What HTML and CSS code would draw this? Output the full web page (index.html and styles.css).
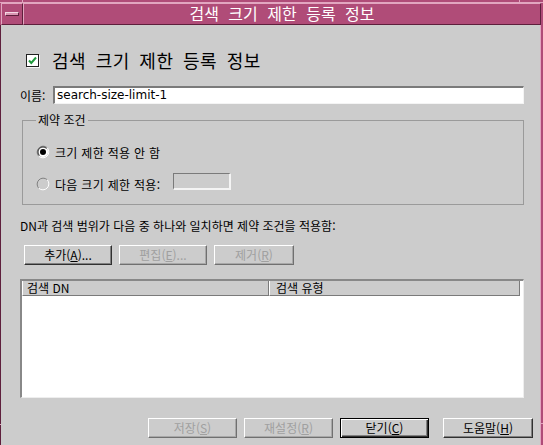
FILE: index.html
```html
<!DOCTYPE html>
<html lang="ko">
<head>
<meta charset="utf-8">
<title>검색 크기 제한 등록 정보</title>
<link rel="stylesheet" href="styles.css">
</head>
<body>
<div class="frame">
  <div class="frame-top"><span class="tick tick-l"></span><span class="tick tick-r"></span></div>
  <div class="titlebar">
    <div class="menu-btn"><span class="menu-bar"></span></div>
    <div class="title">검색 크기 제한 등록 정보</div>
  </div>
  <div class="body-row">
    <div class="client">
      <div class="heading">
        <span class="checkbox"><svg width="11" height="11" viewBox="0 0 11 11"><path d="M2 5.5 L4.3 8 L9 2.5" fill="none" stroke="#1e9a3c" stroke-width="2"/></svg></span>
        <h1 class="heading-text">검색 크기 제한 등록 정보</h1>
      </div>
      <div class="name-row">
        <span class="name-label">이름:</span>
        <div class="field">search-size-limit-1</div>
      </div>
      <fieldset class="group">
        <legend class="group-label">제약 조건</legend>
        <div class="radio-row">
          <svg class="radio" width="14" height="14" viewBox="0 0 14 14">
            <circle cx="7" cy="7" r="5" fill="#fff"/>
            <path d="M2.76 11.24 A6 6 0 0 1 11.24 2.76" stroke="#808080" fill="none"/>
            <path d="M11.24 2.76 A6 6 0 0 1 2.76 11.24" stroke="#fff" fill="none"/>
            <path d="M3.46 10.54 A5 5 0 0 1 10.54 3.46" stroke="#303030" fill="none"/>
            <circle cx="7" cy="7" r="3" fill="#000"/>
          </svg>
          <span>크기 제한 적용 안 함</span>
        </div>
        <div class="radio-row">
          <svg class="radio" width="14" height="14" viewBox="0 0 14 14">
            <path d="M2.76 11.24 A6 6 0 0 1 11.24 2.76" stroke="#808080" fill="none"/>
            <path d="M11.24 2.76 A6 6 0 0 1 2.76 11.24" stroke="#fff" fill="none"/>
          </svg>
          <span>다음 크기 제한 적용:</span>
          <div class="small-field"></div>
        </div>
      </fieldset>
      <p class="desc">DN과 검색 범위가 다음 중 하나와 일치하면 제약 조건을 적용함:</p>
      <div class="btn-row">
        <div class="btn">추가(<u>A</u>)...</div>
        <div class="btn disabled">편집(<u>E</u>)...</div>
        <div class="btn disabled narrow">제거(<u>R</u>)</div>
      </div>
      <div class="table">
        <div class="thead">
          <div class="th c1">검색 DN</div>
          <div class="th c2">검색 유형</div>
        </div>
        <div class="tbody"></div>
      </div>
      <div class="footer">
        <div class="btn disabled">저장(<u>S</u>)</div>
        <div class="btn disabled">재설정(<u>R</u>)</div>
        <div class="btn default">닫기(<u>C</u>)</div>
        <div class="btn help">도움말(<u>H</u>)</div>
      </div>
    </div>
    <div class="frame-right"></div>
  </div>
  <span class="grip grip-l"></span>
  <span class="grip grip-r"></span>
</div>
</body>
</html>
```

FILE: styles.css
```css
* { box-sizing: border-box; }
html, body { margin: 0; padding: 0; }
body {
  width: 543px;
  height: 445px;
  overflow: hidden;
  background: #cccccc;
  font-family: "Noto Sans CJK KR", "DejaVu Sans", sans-serif;
  font-size: 12px;
  color: #000;
}
.frame {
  position: relative;
  width: 543px;
  height: 445px;
  background: #b04c78;
  display: flex;
  flex-direction: column;
}
.frame-top {
  flex: none;
  height: 3px;
  border-bottom: 1px solid #e2a6c0;
}
.tick {
  position: absolute;
  top: 0;
  width: 1px;
  height: 3px;
  background: #e2a6c0;
}
.tick-l { left: 22px; }
.tick-r { left: 519px; }
.titlebar {
  flex: none;
  height: 22px;
  display: flex;
  margin: 0 2px 0 1px;
}
.menu-btn {
  width: 22px;
  border: 1px solid;
  border-color: #e2a6c0 #5e1f3c #5e1f3c #e2a6c0;
  display: flex;
  align-items: center;
  justify-content: center;
}
.menu-bar {
  width: 14px;
  height: 4px;
  background: #d995b2;
  border: 1px solid;
  border-color: #f4d8e4 #5e1f3c #5e1f3c #f4d8e4;
}
.title {
  flex: 1;
  border: 1px solid;
  border-color: #e2a6c0 #5e1f3c #5e1f3c #e2a6c0;
  color: #fff;
  font-size: 16px;
  word-spacing: 5px;
  line-height: 19px;
  text-align: center;
}
.body-row {
  flex: 1;
  display: flex;
  border-left: 1px solid #5e1f3c;
}
.client {
  width: 539px;
  background: #cccccc;
  padding: 21px 8px 0 19px;
  display: flex;
  flex-direction: column;
}
.frame-right {
  width: 3px;
  border-left: 1px solid #e2a6c0;
  background: #b04c78;
}
.grip {
  position: absolute;
  height: 1px;
  background: #e2a6c0;
}
.grip-l { left: 0; top: 424px; width: 1px; }
.grip-r { left: 540px; top: 423px; width: 3px; }

.heading {
  height: 28px;
  display: flex;
  align-items: center;
}
.checkbox {
  width: 13px;
  height: 13px;
  margin-left: 6px;
  background: #fff;
  border: 1px solid #202020;
  box-shadow: 1px 1px #f4f4f4;
  display: flex;
}
.heading-text {
  margin: 0 0 0 13px;
  font-size: 18px;
  font-weight: normal;
  letter-spacing: 0.5px;
  word-spacing: 4px;
  line-height: 28px;
}
.name-row {
  margin-top: 12px;
  height: 18px;
  display: flex;
  align-items: center;
}
.name-label {
  width: 33px;
  flex: none;
}
.field {
  flex: 1;
  height: 18px;
  margin-right: 8px;
  background: #fff;
  border-style: solid;
  border-width: 2px 1px 1px 2px;
  border-color: #7a7a7a #f4f4f4 #f4f4f4 #7a7a7a;
  font-family: "DejaVu Sans", sans-serif;
  font-size: 12px;
  line-height: 14px;
  padding-left: 2px;
}
.group {
  margin: 9px 8px 0 2px;
  padding: 15px 0 10px 13px;
  border: 1px solid #9a9a9a;
  min-width: 0;
}
.group-label {
  padding: 0 2px;
  line-height: 14px;
}
.radio-row {
  height: 20px;
  display: flex;
  align-items: center;
  letter-spacing: 0.3px;
}
.radio-row + .radio-row { margin-top: 12px; }
.radio {
  flex: none;
  margin-right: 5px;
}
.small-field {
  width: 58px;
  height: 17px;
  margin: 0 0 6px 13px;
  background: #cccccc;
  border-style: solid;
  border-width: 1px 2px 2px 1px;
  border-color: #7a7a7a #f4f4f4 #f4f4f4 #7a7a7a;
}
.desc {
  margin: 14px 0 0 0;
  line-height: 14px;
}
.btn-row {
  margin-top: 12px;
  height: 20px;
  display: flex;
  gap: 7px;
  padding-left: 4px;
}
.btn {
  width: 88px;
  height: 20px;
  background: #cccccc;
  border: 1px solid;
  border-color: #fff #303030 #303030 #fff;
  box-shadow: inset -1px -1px #808080;
  text-align: center;
  line-height: 17px;
}
.btn u { text-underline-offset: 1px; }
.btn.narrow { width: 80px; }
.btn.disabled {
  color: #a0a0a0;
  border-color: #fff #707070 #707070 #fff;
  box-shadow: inset -1px -1px #a8a8a8;
}
.btn.default {
  border-color: #000;
  box-shadow: inset 1px 1px #fff, inset -1px -1px #303030, inset -2px -2px #808080;
}
.table {
  margin: 14px 8px 0 0;
  height: 119px;
  display: flex;
  flex-direction: column;
  background: #fff;
  border-style: solid;
  border-width: 2px 1px 1px 2px;
  border-color: #888 #eee #eee #888;
}
.thead {
  height: 15px;
  display: flex;
  background: #fff;
}
.th {
  height: 15px;
  background: #cccccc;
  border-style: solid;
  border-width: 0 1px 1px 1px;
  border-color: #7a7a7a #7a7a7a #7a7a7a #fff;
  line-height: 13px;
  padding-left: 4px;
}
.c1 { width: 247px; }
.c2 { width: 251px; padding-left: 6px; }
.tbody { flex: 1; }
.footer {
  margin-top: 20px;
  height: 20px;
  display: flex;
  justify-content: flex-end;
  gap: 7px;
  margin-right: -1px;
}
.footer .btn { width: 89px; }
.footer .btn.help { margin-left: 7px; width: 90px; }
```
